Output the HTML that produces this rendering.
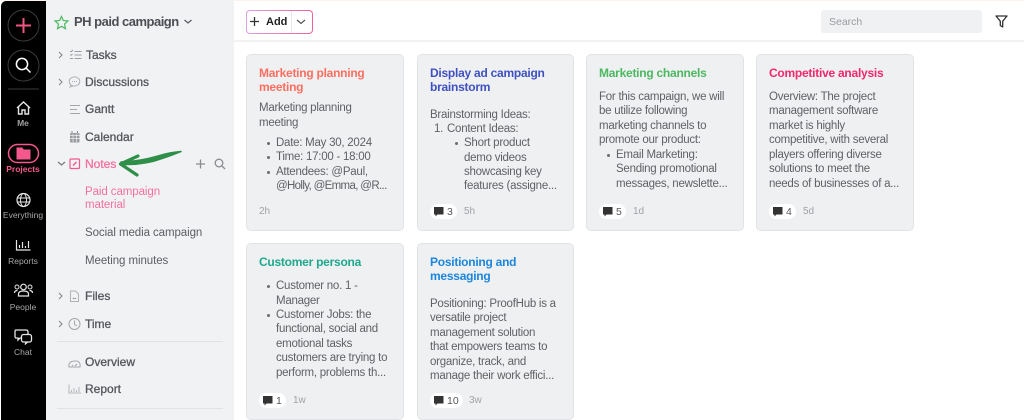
<!DOCTYPE html>
<html><head><meta charset="utf-8"><style>
html,body{margin:0;padding:0;width:1024px;height:420px;overflow:hidden;background:#fff;font-family:"Liberation Sans",sans-serif}
div,span{position:absolute;white-space:nowrap}
svg{position:absolute;overflow:visible}
.rail{color:#a8a8a8;font-size:8.5px;text-align:center;left:0;width:46px}
.nav{font-size:12px;color:#54565c;line-height:14px;-webkit-text-stroke:.3px #54565c}
.sub{font-size:11.5px;color:#5c5e64;line-height:14px;letter-spacing:-.08px;margin-top:1px}
.card{background:#eff0f2;border:1px solid #e2e3e6;border-radius:5px;box-sizing:border-box}
.t{font-size:12px;font-weight:bold;line-height:14px;letter-spacing:-.25px}
.l{font-size:11.5px;color:#5f6166;line-height:14px;letter-spacing:-.25px;margin-top:1px}
.b{width:3px;height:3px;border-radius:50%;background:#6a6c71;margin:7px 0 0 .5px}
.m{font-size:10px;color:#a0a2a6;line-height:12px;margin-top:1px}
.pill{background:#fff;border-radius:8px;height:14.5px;margin-top:1px}
.n{font-size:10.5px;color:#55575b;line-height:12px;margin-top:1px}
</style></head><body>
<div style="left:0;top:0;width:1024px;height:1px;background:#fdf3ee"></div>
<div style="left:1px;top:1px;width:45px;height:419px;background:#000;border-radius:5px 0 0 0"></div>
<div style="left:46px;top:0;width:188px;height:420px;background:#f1f2f4"></div>
<div style="left:234px;top:40px;width:790px;height:2px;background:#f2f2f3"></div>

<!-- Rail -->
<svg style="left:0;top:0" width="46" height="420" fill="none">
<circle cx="23.5" cy="25.5" r="15.5" stroke="#3c3c3c"/>
<path d="M23.5 18v15M16 25.5h15" stroke="#f4557f" stroke-width="2"/>
<circle cx="23.5" cy="65.5" r="15.5" stroke="#3c3c3c"/>
<circle cx="22" cy="64" r="5.6" stroke="#fff" stroke-width="1.5"/><path d="M26 68l4.5 4.5" stroke="#fff" stroke-width="1.5"/>
<path d="M8 89h31" stroke="#3a3a3a"/>
<path d="M17 108l6.5-6 6.5 6M18.500 107v7h3.500v-4h3v4h3.500v-7" stroke="#e6e6e6" stroke-width="1.400"/>
<rect x="8.500" y="144.500" width="30" height="18" rx="9" stroke="#f4588c" stroke-width="1.500"/>
<path d="M17 148h5l1.500 2h6.500v9h-13z" fill="#f4588c" stroke="#f4588c"/>
<circle cx="23.500" cy="200" r="6.500" stroke="#e6e6e6" stroke-width="1.200"/><ellipse cx="23.500" cy="200" rx="3" ry="6.500" stroke="#e6e6e6"/><path d="M17 198h13M17 202h13" stroke="#e6e6e6"/>
<path d="M16.500 240v10h14" stroke="#e6e6e6" stroke-width="1.200"/><path d="M19.500 248v-3M22.500 248v-6M25.500 248v-2M28.500 248v-7" stroke="#e6e6e6" stroke-width="1.200"/>
<circle cx="23.500" cy="287" r="2.800" stroke="#e6e6e6" stroke-width="1.200"/><circle cx="17" cy="287" r="2" stroke="#e6e6e6"/><circle cx="30" cy="287" r="2" stroke="#e6e6e6"/><path d="M18.500 296v-2q0-3 5-3t5 3v2zM14.500 293q0-2.500 3-2.500M32.500 293q0-2.500-3-2.500" stroke="#e6e6e6" stroke-width="1.200"/>
<path d="M16 330h10q2 0 2 2v4q0 2-2 2h-6l-2 2v-2h-2q-1 0-1-2v-4q0-2 1-2z" stroke="#e6e6e6" stroke-width="1.300"/>
<rect x="21.500" y="334.500" width="10" height="7.500" rx="2" fill="#000" stroke="#e6e6e6" stroke-width="1.300"/><path d="M26 342l-1 2.500 3-2.500" stroke="#e6e6e6"/>
</svg>
<div class="rail" style="top:118px;color:#a0a0a0;font-weight:bold">Me</div>
<div class="rail" style="top:164px;color:#f4588c;font-weight:bold">Projects</div>
<div class="rail" style="top:210px">Everything</div>
<div class="rail" style="top:256px">Reports</div>
<div class="rail" style="top:302px">People</div>
<div class="rail" style="top:347px">Chat</div>

<!-- Sidebar -->
<svg style="left:46px;top:0" width="188" height="420" fill="none">
<path d="M15.500 16.500l1.800 4 4.700.5-3.500 3.100 1 4.600-4-2.400-4 2.400 1-4.600-3.500-3.100 4.700-.5z" stroke="#4cb860" stroke-width="1.200"/>
<path d="M138.500 20l3.500 3 3.500-3" stroke="#55575c" stroke-width="1.200"/>
<path d="M13 52l3 3-3 3M13 79l3 3-3 3M13 293l3 3-3 3M13 321l3 3-3 3" stroke="#888" stroke-width="1.100"/>
<path d="M12 162l3.500 3 3.500-3" stroke="#777" stroke-width="1.200"/>
<path d="M24 51.500h1.500l1.500-1.500M24 55h1.500l1-1M24 58.500h3M28.500 51.500h7M28.500 55h7M28.500 58.500h7" stroke="#9a9ca0" stroke-width="1.100"/>
<ellipse cx="28.500" cy="81.500" rx="5.300" ry="4.600" stroke="#b0b2b6"/><path d="M25 85l-1 2 3-1M26 81.500h1M28 81.500h1M30 81.500h1" stroke="#b0b2b6"/>
<path d="M24 105.500h10M24 109.500h7M24 113.500h10" stroke="#a4a6aa" stroke-width="1.100"/>
<rect x="24" y="133" width="9.500" height="9.500" rx="1" fill="#9a9ca0"/><path d="M26 131.500v2M31.500 131.500v2M24 135.500h9.500M27 134v8M30.500 134v8M24 138.500h9.500" stroke="#eceef0" stroke-width=".7"/><path d="M26 131v2M31.500 131v2" stroke="#85878b"/>
<rect x="24" y="159" width="9.500" height="9.500" rx="1" stroke="#f4588c" stroke-width="1.200"/><path d="M27 165.500l3.500-3.500" stroke="#f4588c" stroke-width="1.500"/>
<path d="M150 164h9M154.500 159.500v9" stroke="#8a8c90" stroke-width="1.300"/>
<circle cx="173" cy="163" r="3.800" stroke="#8a8c90" stroke-width="1.300"/><path d="M176 166l3 3" stroke="#8a8c90" stroke-width="1.300"/>
<path d="M24.500 291h5l3 3v7.500h-8z" stroke="#b0b2b6"/><path d="M26 299l1.500-1.500 1 1 1-1 1 1.500z" fill="#9a9ca0"/>
<circle cx="28.500" cy="324" r="5.500" stroke="#a4a6aa"/><path d="M28.500 320.500v4l2.500 1.500" stroke="#a4a6aa"/>
<path d="M11 341.500h166M11 408.500h166" stroke="#e1e2e5"/>
<path d="M23 367q-1-5.500 5.500-6t5.500 6zM26 365l1 1M31 364l-2 2" stroke="#a4a6aa"/>
<path d="M23 384.500v8.500h12" stroke="#b4b6ba"/><path d="M25.500 392v-2M28 392v-4M30.500 392v-2M33 392v-5" stroke="#b4b6ba"/>
</svg>
<!-- green arrow -->
<svg style="left:118px;top:148px" width="66" height="30" fill="none">
<path d="M3 16.500C20 17 32 15 44 10.500 52 8 58 5.500 63 3.500 56 4 48 5.500 40 8 28 11.500 16 13.500 3 14z" fill="#2f8f49" stroke="#2f8f49" stroke-width="1.500" stroke-linejoin="round"/>
<path d="M20 8L2.500 16 19 27" stroke="#2f8f49" stroke-width="3.200" stroke-linejoin="round" stroke-linecap="round"/>
</svg>
<div style="left:74px;top:14px;font-size:13px;font-weight:bold;color:#4c4e54;line-height:16px;letter-spacing:-.5px">PH paid campaign</div>
<div class="nav" style="left:86px;top:48px">Tasks</div>
<div class="nav" style="left:85px;top:75px">Discussions</div>
<div class="nav" style="left:85px;top:102px">Gantt</div>
<div class="nav" style="left:85px;top:130px">Calendar</div>
<div class="nav" style="left:85px;top:157px;color:#f4709c;-webkit-text-stroke-color:#f4709c">Notes</div>
<div class="sub" style="left:85px;top:184px;color:#f4709c">Paid campaign</div>
<div class="sub" style="left:85px;top:197px;color:#f4709c">material</div>
<div class="sub" style="left:85px;top:225px">Social media campaign</div>
<div class="sub" style="left:85px;top:253px">Meeting minutes</div>
<div class="nav" style="left:85px;top:289px">Files</div>
<div class="nav" style="left:85px;top:317px">Time</div>
<div class="nav" style="left:85px;top:355px">Overview</div>
<div class="nav" style="left:85px;top:382px">Report</div>

<!-- Toolbar -->
<div style="left:246px;top:10px;width:65px;height:22px;border:1px solid transparent;border-radius:4px;background:linear-gradient(#fff,#fff) padding-box,linear-gradient(90deg,#d9a0e0,#f0609a) border-box"></div>
<div style="left:291px;top:11px;width:1px;height:22px;background:#e6e6e8"></div>
<svg style="left:246px;top:10px" width="70" height="24" fill="none">
<path d="M4 11.500h9M8.500 7v9" stroke="#333" stroke-width="1.300"/>
<path d="M51 10l4 3.500 4-3.500" stroke="#555" stroke-width="1.200"/>
</svg>
<div style="left:266px;top:15px;font-size:11px;font-weight:bold;color:#222;line-height:14px">Add</div>
<div style="left:821px;top:10px;width:161px;height:23px;background:#f0f1f3;border-radius:3px"></div>
<div style="left:829px;top:16px;font-size:10.500px;color:#9a9ca0;line-height:13px">Search</div>
<svg style="left:994px;top:14px" width="15" height="15" fill="none"><path d="M2 2h11l-4.300 5.200v5.800l-2.400-1.400V7.200z" stroke="#333" stroke-width="1.300" stroke-linejoin="round"/></svg>

<!-- Card 1 -->
<div class="card" style="left:246px;top:54px;width:158px;height:177px"></div>
<div class="t" style="left:259px;top:66px;color:#fb6f60">Marketing planning</div>
<div class="t" style="left:259px;top:80px;color:#fb6f60">meeting</div>
<div class="l" style="left:259px;top:100px">Marketing planning</div>
<div class="l" style="left:259px;top:115px">meeting</div>
<div class="b" style="left:266px;top:135px"></div><div class="l" style="left:276px;top:135px">Date: May 30, 2024</div>
<div class="b" style="left:266px;top:149px"></div><div class="l" style="left:276px;top:149px">Time: 17:00 - 18:00</div>
<div class="b" style="left:266px;top:164px"></div><div class="l" style="left:276px;top:164px">Attendees: @Paul,</div>
<div class="l" style="left:276px;top:178px;letter-spacing:-.65px">@Holly, @Emma, @R...</div>
<div class="m" style="left:259px;top:205px">2h</div>

<!-- Card 2 -->
<div class="card" style="left:417px;top:54px;width:157px;height:177px"></div>
<div class="t" style="left:430px;top:66px;color:#3f51c0">Display ad campaign</div>
<div class="t" style="left:430px;top:80px;color:#3f51c0">brainstorm</div>
<div class="l" style="left:430px;top:107px">Brainstorming Ideas:</div>
<div class="l" style="left:434px;top:121px">1.</div><div class="l" style="left:447px;top:121px">Content Ideas:</div>
<div class="b" style="left:454px;top:135px"></div><div class="l" style="left:464px;top:135px">Short product</div>
<div class="l" style="left:464px;top:150px">demo videos</div>
<div class="l" style="left:464px;top:164px">showcasing key</div>
<div class="l" style="left:464px;top:178px">features (assigne...</div>
<div class="pill" style="left:430px;top:203px;width:27px"></div>
<svg style="left:434px;top:206.500px" width="10" height="10"><path d="M0 0h9.500v7.500H3.500L1.500 9.500V7.500H0z" fill="#333"/></svg>
<div class="n" style="left:447px;top:205px">3</div><div class="m" style="left:464px;top:205px">5h</div>

<!-- Card 3 -->
<div class="card" style="left:586px;top:54px;width:158px;height:177px"></div>
<div class="t" style="left:599px;top:66px;color:#4cb860">Marketing channels</div>
<div class="l" style="left:599px;top:89px">For this campaign, we will</div>
<div class="l" style="left:599px;top:103px">be utilize following</div>
<div class="l" style="left:599px;top:118px">marketing channels to</div>
<div class="l" style="left:599px;top:132px">promote our product:</div>
<div class="b" style="left:606px;top:147px"></div><div class="l" style="left:616px;top:147px">Email Marketing:</div>
<div class="l" style="left:616px;top:161px">Sending promotional</div>
<div class="l" style="left:616px;top:176px">messages, newslette...</div>
<div class="pill" style="left:599px;top:203px;width:27px"></div>
<svg style="left:603px;top:206.500px" width="10" height="10"><path d="M0 0h9.500v7.500H3.500L1.500 9.500V7.500H0z" fill="#333"/></svg>
<div class="n" style="left:616px;top:205px">5</div><div class="m" style="left:633px;top:205px">1d</div>

<!-- Card 4 -->
<div class="card" style="left:756px;top:54px;width:158px;height:177px"></div>
<div class="t" style="left:769px;top:66px;color:#f0286c">Competitive analysis</div>
<div class="l" style="left:769px;top:89px">Overview: The project</div>
<div class="l" style="left:769px;top:103px">management software</div>
<div class="l" style="left:769px;top:118px">market is highly</div>
<div class="l" style="left:769px;top:132px">competitive, with several</div>
<div class="l" style="left:769px;top:147px">players offering diverse</div>
<div class="l" style="left:769px;top:161px">solutions to meet the</div>
<div class="l" style="left:769px;top:176px">needs of businesses of a...</div>
<div class="pill" style="left:769px;top:203px;width:27px"></div>
<svg style="left:773px;top:206.500px" width="10" height="10"><path d="M0 0h9.500v7.500H3.500L1.500 9.500V7.500H0z" fill="#333"/></svg>
<div class="n" style="left:786px;top:205px">4</div><div class="m" style="left:803px;top:205px">5d</div>

<!-- Card 5 -->
<div class="card" style="left:246px;top:243px;width:158px;height:177px"></div>
<div class="t" style="left:259px;top:255px;color:#1fa88e">Customer persona</div>
<div class="b" style="left:266px;top:278px"></div><div class="l" style="left:276px;top:278px">Customer no. 1 -</div>
<div class="l" style="left:276px;top:293px">Manager</div>
<div class="b" style="left:266px;top:307px"></div><div class="l" style="left:276px;top:307px">Customer Jobs: the</div>
<div class="l" style="left:276px;top:321px">functional, social and</div>
<div class="l" style="left:276px;top:336px">emotional tasks</div>
<div class="l" style="left:276px;top:350px">customers are trying to</div>
<div class="l" style="left:276px;top:365px">perform, problems th...</div>
<div class="pill" style="left:259px;top:392px;width:27px"></div>
<svg style="left:263px;top:395.500px" width="10" height="10"><path d="M0 0h9.500v7.500H3.500L1.500 9.500V7.500H0z" fill="#333"/></svg>
<div class="n" style="left:276px;top:394px">1</div><div class="m" style="left:293px;top:394px">1w</div>

<!-- Card 6 -->
<div class="card" style="left:417px;top:243px;width:157px;height:177px"></div>
<div class="t" style="left:430px;top:255px;color:#1c86dc">Positioning and</div>
<div class="t" style="left:430px;top:269px;color:#1c86dc">messaging</div>
<div class="l" style="left:430px;top:296px">Positioning: ProofHub is a</div>
<div class="l" style="left:430px;top:310px">versatile project</div>
<div class="l" style="left:430px;top:325px">management solution</div>
<div class="l" style="left:430px;top:339px">that empowers teams to</div>
<div class="l" style="left:430px;top:354px">organize, track, and</div>
<div class="l" style="left:430px;top:368px">manage their work effici...</div>
<div class="pill" style="left:430px;top:392px;width:33px"></div>
<svg style="left:434px;top:395.500px" width="10" height="10"><path d="M0 0h9.500v7.500H3.500L1.500 9.500V7.500H0z" fill="#333"/></svg>
<div class="n" style="left:447px;top:394px">10</div><div class="m" style="left:469px;top:394px">3w</div>
</body></html>
